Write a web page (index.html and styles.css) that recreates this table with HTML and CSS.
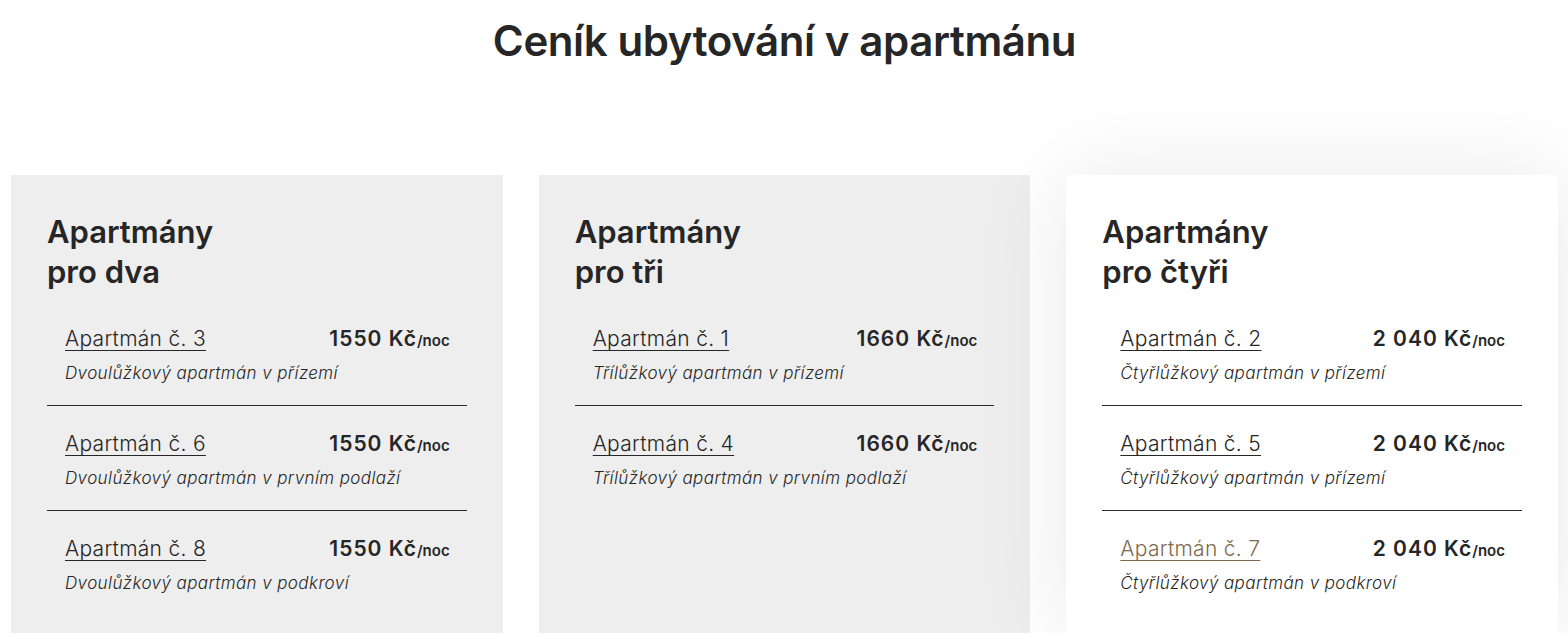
FILE: index.html
```html
<!DOCTYPE html>
<html lang="cs">
<head>
    <meta charset="UTF-8" />
    <meta name="viewport" content="width=device-width, initial-scale=1.0" />
    <title>Ceník ubytování v apartmánu</title>
    <link rel="stylesheet" href="styles.css">
</head>
<body>
    <section class="pricing">
        <h1 class="pricing-title">Ceník ubytování v apartmánu</h1>

        <div class="cards">
            <div class="card">
                <h2 class="card-title">Apartmány<br>pro dva</h2>
                <ul class="rooms">
                    <li class="room">
                        <div class="room-head">
                            <a href="#" class="room-link">Apartmán č. 3</a>
                            <span class="room-price">1550 Kč<small>/noc</small></span>
                        </div>
                        <p class="room-desc">Dvoulůžkový apartmán v přízemí</p>
                    </li>
                    <li class="room">
                        <div class="room-head">
                            <a href="#" class="room-link">Apartmán č. 6</a>
                            <span class="room-price">1550 Kč<small>/noc</small></span>
                        </div>
                        <p class="room-desc">Dvoulůžkový apartmán v prvním podlaží</p>
                    </li>
                    <li class="room">
                        <div class="room-head">
                            <a href="#" class="room-link">Apartmán č. 8</a>
                            <span class="room-price">1550 Kč<small>/noc</small></span>
                        </div>
                        <p class="room-desc">Dvoulůžkový apartmán v podkroví</p>
                    </li>
                </ul>
            </div>

            <div class="card">
                <h2 class="card-title">Apartmány<br>pro tři</h2>
                <ul class="rooms">
                    <li class="room">
                        <div class="room-head">
                            <a href="#" class="room-link">Apartmán č. 1</a>
                            <span class="room-price">1660 Kč<small>/noc</small></span>
                        </div>
                        <p class="room-desc">Třílůžkový apartmán v přízemí</p>
                    </li>
                    <li class="room">
                        <div class="room-head">
                            <a href="#" class="room-link">Apartmán č. 4</a>
                            <span class="room-price">1660 Kč<small>/noc</small></span>
                        </div>
                        <p class="room-desc">Třílůžkový apartmán v prvním podlaží</p>
                    </li>
                </ul>
            </div>

            <div class="card card-active">
                <h2 class="card-title">Apartmány<br>pro čtyři</h2>
                <ul class="rooms">
                    <li class="room">
                        <div class="room-head">
                            <a href="#" class="room-link">Apartmán č. 2</a>
                            <span class="room-price">2 040 Kč<small>/noc</small></span>
                        </div>
                        <p class="room-desc">Čtyřlůžkový apartmán v přízemí</p>
                    </li>
                    <li class="room">
                        <div class="room-head">
                            <a href="#" class="room-link">Apartmán č. 5</a>
                            <span class="room-price">2 040 Kč<small>/noc</small></span>
                        </div>
                        <p class="room-desc">Čtyřlůžkový apartmán v přízemí</p>
                    </li>
                    <li class="room">
                        <div class="room-head">
                            <a href="#" class="room-link room-link-hover">Apartmán č. 7</a>
                            <span class="room-price">2 040 Kč<small>/noc</small></span>
                        </div>
                        <p class="room-desc">Čtyřlůžkový apartmán v podkroví</p>
                    </li>
                </ul>
            </div>
        </div>
    </section>
</body>
</html>
```

FILE: styles.css
```css
:root {
  --text-dark: #262626;
  --card-grey: #eeeeee;
  --link-hover: #7d6a4c;
  --line-color: #2b2b2b;
}

body {
  margin: 0;
  font-family: 'Inter', 'Lato', sans-serif;
  color: var(--text-dark);
  background-color: #ffffff;
  overflow: hidden;
}

.pricing {
  padding: 15px 10px 0 11px;
}

.pricing-title {
  margin: 0;
  text-align: center;
  font-size: 42px;
  font-weight: 600;
  line-height: 52px;
  letter-spacing: -0.4px;
}

.cards {
  display: grid;
  grid-template-columns: repeat(3, 1fr);
  gap: 36px;
  margin-top: 108px;
}

.card {
  background-color: var(--card-grey);
  padding: 37px 36px 0;
  height: 458px;
  box-sizing: border-box;
}

/* Third card shown in its hover state */
.card-active {
  background-color: #ffffff;
  box-shadow: 0 0 90px rgba(0, 0, 0, 0.09);
}

.card-title {
  margin: 0 0 9px;
  font-size: 31px;
  font-weight: 600;
  line-height: 40px;
  letter-spacing: 0;
}

.rooms {
  list-style: none;
  margin: 0;
  padding: 0;
}

.room {
  padding: 23px 17px 20px 18px;
  border-bottom: 1px solid var(--line-color);
}

.room:last-child {
  border-bottom: none;
}

.room-head {
  display: flex;
  justify-content: space-between;
  align-items: baseline;
}

.room-link {
  color: var(--text-dark);
  font-size: 21px;
  font-weight: 300;
  line-height: 30px;
  text-decoration: underline;
  text-decoration-thickness: 1px;
  text-underline-offset: 4px;
  letter-spacing: 0.3px;
}

.room-link-hover {
  color: var(--link-hover);
}

.room-price {
  font-size: 21px;
  font-weight: 600;
  letter-spacing: 1px;
}

.room-price small {
  font-size: 15px;
  letter-spacing: 0;
}

.room-desc {
  margin: 7px 0 0;
  font-size: 17px;
  font-style: italic;
  font-weight: 300;
  line-height: 24px;
  letter-spacing: 0.4px;
}
```
